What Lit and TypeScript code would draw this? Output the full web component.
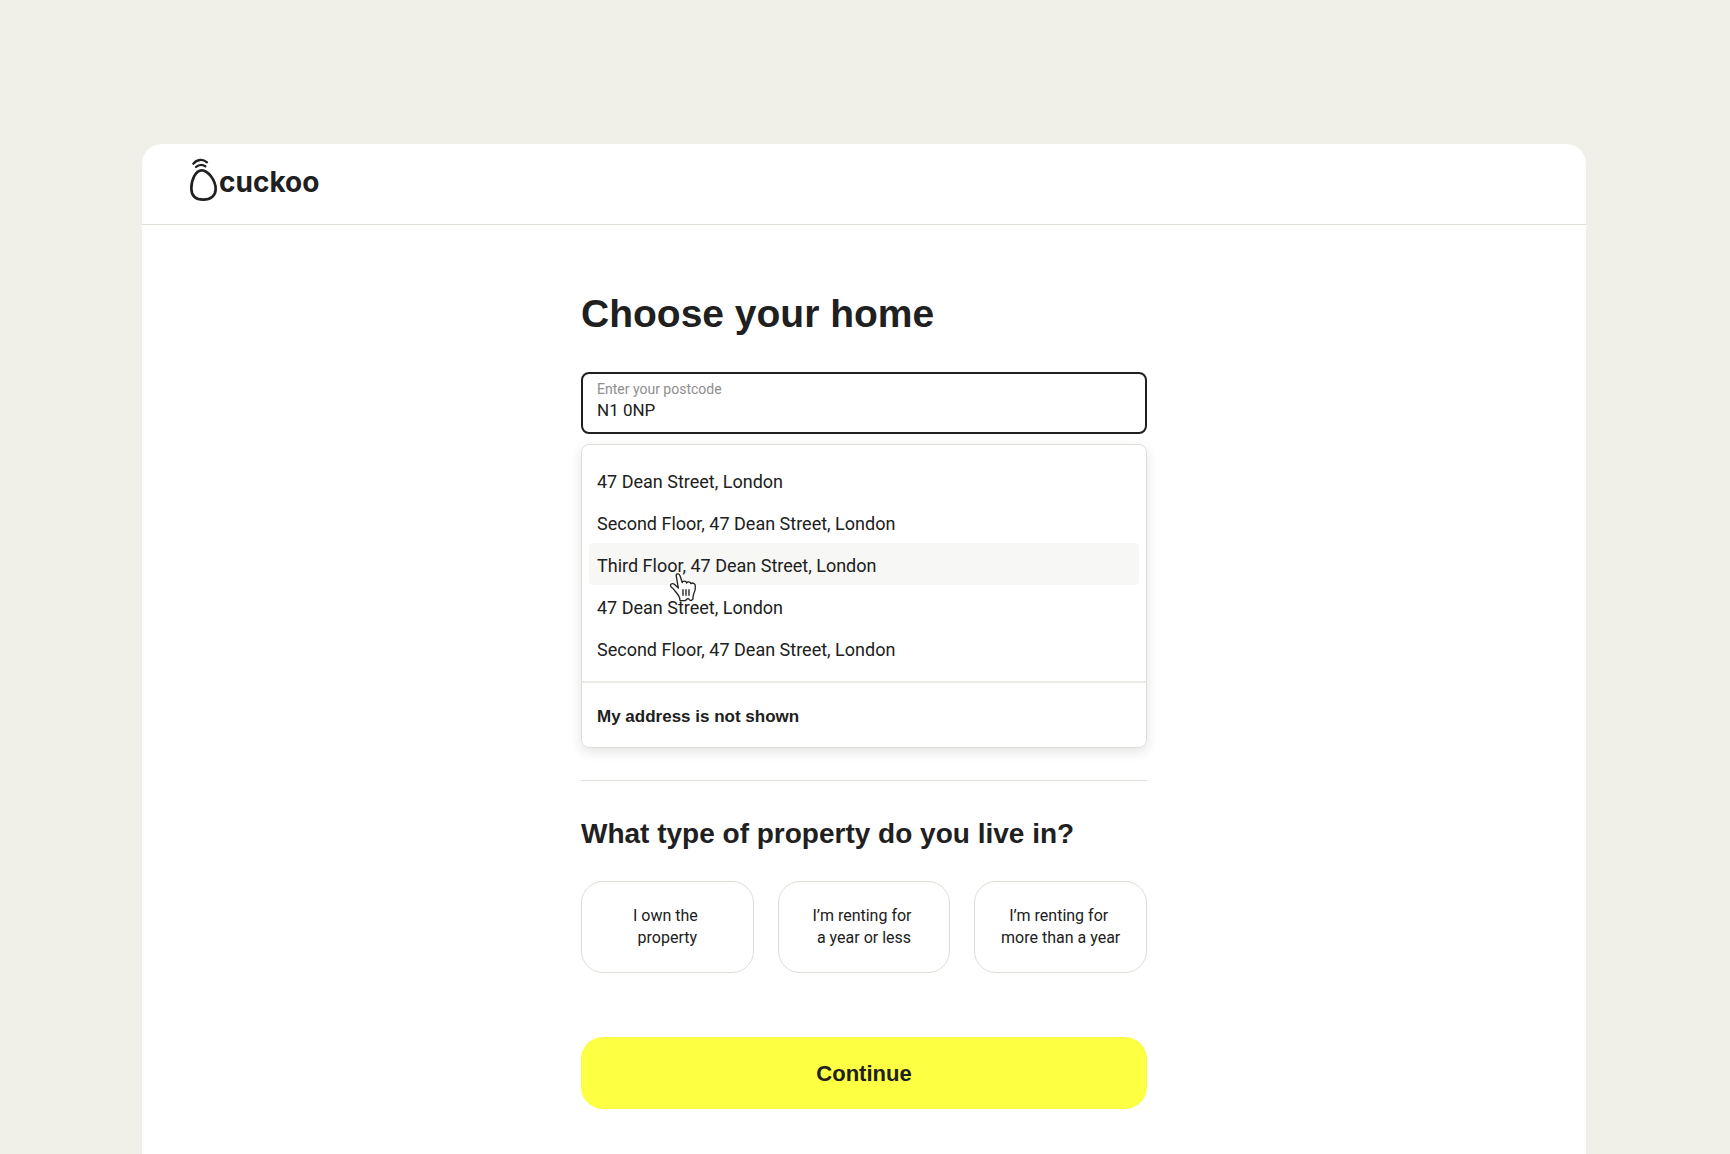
import { LitElement, html, css, nothing } from "lit";
import { customElement, state } from "lit/decorators.js";
import { classMap } from "lit/directives/class-map.js";

const ADDRESSES = [
  "47 Dean Street, London",
  "Second Floor, 47 Dean Street, London",
  "Third Floor, 47 Dean Street, London",
  "47 Dean Street, London",
  "Second Floor, 47 Dean Street, London",
];

const PROPERTY_TYPES = [
  { value: "own", label: "I own the \nproperty" },
  { value: "rent-short", label: "I’m renting for \na year or less" },
  { value: "rent-long", label: "I’m renting for \nmore than a year" },
];

@customElement("cuckoo-logo")
export class CuckooLogo extends LitElement {
  static styles = css`
    :host {
      display: block;
    }
    .logo {
      display: flex;
      align-items: center;
      gap: 2px;
      color: #202020;
      text-decoration: none;
    }
    .mark {
      width: 27px;
      height: 45px;
      flex: none;
    }
    .name {
      font: 700 28px/36px Inter, "Liberation Sans", sans-serif;
      padding-top: 7px;
    }
  `;

  render() {
    return html`
      <a class="logo" href="#">
        <svg class="mark" viewBox="18 6 81 135" fill="none" stroke="currentColor" stroke-linecap="round" aria-hidden="true">
          <path stroke-width="7" d="M28 29C39 16 56 14 69 25" />
          <path stroke-width="7" d="M36 39C43 32 55 31 64 37" />
          <path stroke-width="8" d="M53 49C36 49 22 76 22 103C22 126 36 137 58 137C81 137 95 124 95 105C95 80 73 49 53 49Z" />
        </svg>
        <span class="name">cuckoo</span>
      </a>
    `;
  }
}

@customElement("app-root")
export class AppRoot extends LitElement {
  static styles = css`
    :host {
      --ink: #202020;
      --line: #deded6;
      --sand: #f0f0e8;
      --body: Roboto, "Liberation Sans", sans-serif;
      --display: "Liberation Sans", Arial, sans-serif;
      display: flex;
      flex-direction: column;
      box-sizing: border-box;
      min-height: 100vh;
      padding: 144px 144px 0 142px;
      background: var(--sand);
      color: var(--ink);
      font-family: var(--body);
    }
    *,
    *::before {
      box-sizing: border-box;
    }
    .card {
      flex: 1;
      background: #fff;
      border-radius: 20px 20px 0 0;
    }
    .header {
      display: flex;
      align-items: center;
      height: 81px;
      padding: 0 48px 11px;
      border-bottom: 1px solid var(--line);
    }
    .main {
      max-width: 566px;
      margin: 0 auto;
      padding: 65px 0 44px;
    }
    .title {
      margin: 0 0 34px;
      font: 700 39px/48px var(--display);
    }
    .field {
      display: flex;
      flex-direction: column;
      gap: 2px;
      height: 62px;
      padding: 7px 14px 0;
      border: 2px solid var(--ink);
      border-radius: 8px;
    }
    .field-label {
      color: #8e8e8e;
      font-size: 14px;
      line-height: 16px;
    }
    .field-input {
      width: 100%;
      height: 22px;
      padding: 0;
      border: 0;
      outline: 0;
      background: none;
      color: inherit;
      font: 400 17px/22px var(--body);
    }
    .dropdown {
      margin-top: 10px;
      border: 1px solid var(--line);
      border-radius: 8px;
      box-shadow: 0 4px 12px rgba(32, 32, 32, 0.12);
    }
    .addresses {
      margin: 0;
      padding: 14px 7px 12px;
      list-style: none;
    }
    .row {
      position: relative;
    }
    .address,
    .missing {
      display: block;
      width: 100%;
      border: 0;
      background: none;
      color: inherit;
      text-align: left;
      cursor: pointer;
    }
    .address {
      height: 42px;
      padding: 4px 8px 0;
      border-radius: 4px;
      font: 400 18px/24px var(--body);
    }
    .address.active {
      background: #f7f7f5;
    }
    .missing {
      height: 66px;
      padding: 4px 15px 0;
      border-top: 2px solid #ebebe5;
      font: 700 17px/24px var(--display);
    }
    .pointer {
      position: absolute;
      left: 77px;
      top: 27px;
      z-index: 1;
      width: 34px;
      height: 34px;
      pointer-events: none;
    }
    .divider {
      height: 1px;
      margin: 32px 0 35px;
      border: 0;
      background: var(--line);
    }
    .subtitle {
      margin: 0 0 29px;
      font: 700 28px/36px var(--display);
    }
    .choices {
      display: grid;
      grid-template-columns: repeat(3, 1fr);
      gap: 24px;
    }
    .choice {
      display: flex;
      align-items: center;
      justify-content: center;
      height: 92px;
      border: 1px solid var(--line);
      border-radius: 22px;
      font-size: 16px;
      line-height: 22px;
      text-align: center;
      cursor: pointer;
    }
    .choice-text {
      white-space: pre;
    }
    .choice.chosen {
      border-color: var(--ink);
    }
    .radio {
      position: absolute;
      opacity: 0;
      pointer-events: none;
    }
    .continue {
      display: block;
      width: 100%;
      height: 72px;
      margin-top: 64px;
      padding: 2px 0 0;
      border: 0;
      border-radius: 22px;
      background: #fcff42;
      color: inherit;
      font: 700 22px/28px var(--display);
      cursor: pointer;
    }
  `;

  @state() private active = 2;
  @state() private chosen = "";

  private renderPointer() {
    return html`
      <svg class="pointer" viewBox="0 0 102 102" stroke="#202020" stroke-width="4" stroke-linejoin="round" stroke-linecap="round" aria-hidden="true">
        <path
          fill="#fff"
          d="M31 19C28 10 39 9 42 17L49 38C50 32 60 32 62 39C64 34 73 35 75 41C79 37 88 40 88 48C89 58 86 66 83 72C81 76 81 81 81 87L75 92C72 93 70 86 66 86C62 86 60 92 56 92L43 92C41 92 42 88 41 84C39 76 32 70 27 63C23 57 19 54 15 50C10 43 19 38 25 43L37 54Z"
        />
        <path fill="none" d="M51 59V76M60 59V76M69 59V76" />
      </svg>
    `;
  }

  render() {
    return html`
      <div class="card">
        <header class="header"><cuckoo-logo></cuckoo-logo></header>
        <main class="main">
          <h1 class="title">Choose your home</h1>
          <div class="field">
            <label class="field-label" for="postcode">Enter your postcode</label>
            <input class="field-input" id="postcode" type="text" autocomplete="postal-code" value="N1 0NP" />
          </div>
          <div class="dropdown">
            <ul class="addresses">
              ${ADDRESSES.map(
                (address, i) => html`
                  <li class="row">
                    <button
                      type="button"
                      class=${classMap({ address: true, active: i === this.active })}
                      @mouseenter=${() => (this.active = i)}
                    >${address}</button>
                    ${i === this.active ? this.renderPointer() : nothing}
                  </li>
                `
              )}
            </ul>
            <button type="button" class="missing">My address is not shown</button>
          </div>
          <hr class="divider" />
          <h2 class="subtitle" id="property-type">What type of property do you live in?</h2>
          <div class="choices" role="radiogroup" aria-labelledby="property-type">
            ${PROPERTY_TYPES.map(
              (type) => html`
                <label class=${classMap({ choice: true, chosen: type.value === this.chosen })}>
                  <input
                    class="radio"
                    type="radio"
                    name="property"
                    value=${type.value}
                    @change=${() => (this.chosen = type.value)}
                  />
                  <span class="choice-text">${type.label}</span>
                </label>
              `
            )}
          </div>
          <button type="button" class="continue">Continue</button>
        </main>
      </div>
    `;
  }
}
